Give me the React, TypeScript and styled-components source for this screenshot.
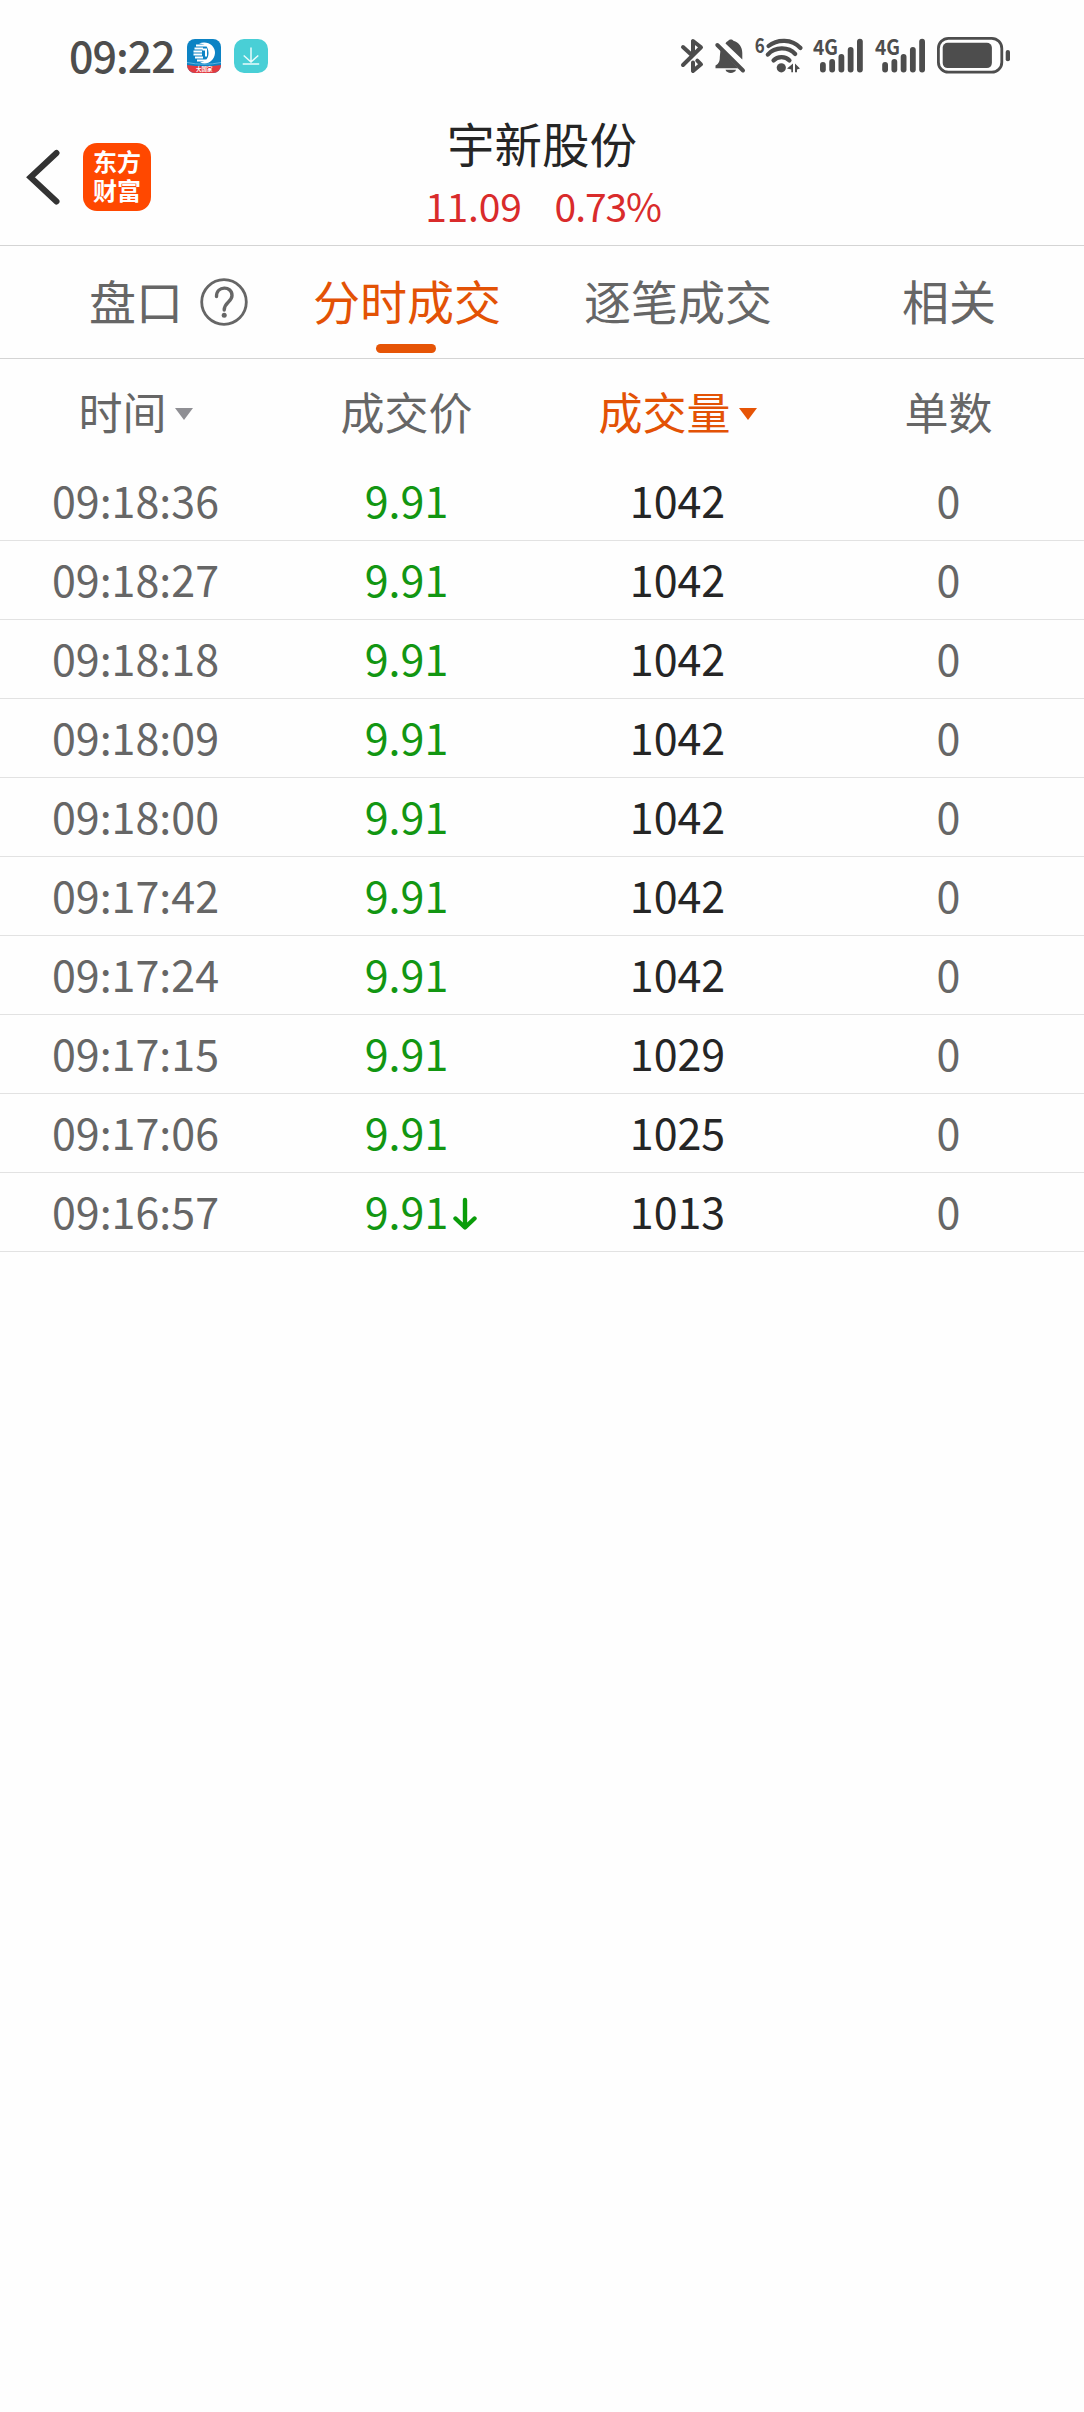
import React from 'react';
import styled, { createGlobalStyle } from 'styled-components';

const GlobalStyle = createGlobalStyle`
  * { box-sizing: border-box; }
  body {
    margin: 0;
    background: #fefefe;
    font-family: "Noto Sans CJK SC", "Noto Sans", sans-serif;
    font-weight: 400;
    color: #252525;
  }
`;

const Screen = styled.div`
  width: 1084px;
  min-height: 2412px;
  background: #fefefe;
`;

const StatusBar = styled.div`
  display: flex;
  align-items: center;
  justify-content: space-between;
  height: 112px;
  padding: 0 72px 0 69px;
`;

const StatusLeft = styled.div`
  display: flex;
  align-items: center;
  gap: 12px;
`;

const Clock = styled.span`
  padding-bottom: 5px;
  font-size: 43px;
  line-height: 60px;
  font-weight: 500;
  color: #4d4d4d;
  letter-spacing: -1px;
`;

const StatusIcons = styled.svg`
  display: block;
`;

const Header = styled.header`
  display: grid;
  grid-template-columns: 271px 1fr 271px;
  grid-template-rows: 133px;
  align-items: center;
  height: 134px;
  border-bottom: 1px solid #d4d4d4;
`;

const HeaderLeft = styled.div`
  display: flex;
  align-items: center;
  gap: 23px;
  height: 70px;
  margin-top: -3px;
  padding: 0 0 0 26px;
`;

const Logo = styled.div`
  width: 68px;
  height: 68px;
  padding: 3px 9px 0 10px;
  border-radius: 14px;
  background: #ff4800;
  color: #fff;
  font-size: 24px;
  line-height: 29px;
  font-weight: 700;
  word-break: break-all;
`;

const Heading = styled.div`
  display: flex;
  flex-direction: column;
  align-items: center;
  padding-bottom: 13px;
`;

const StockName = styled.h1`
  margin: 0;
  font-size: 47.5px;
  line-height: 66px;
  font-weight: 400;
`;

const Quote = styled.div`
  display: flex;
  gap: 33px;
  padding-left: 2px;
  font-size: 39px;
  line-height: 58px;
  color: #d92b2b;
`;

const Figure = styled.span<{ $tracking: number }>`
  letter-spacing: ${(p) => p.$tracking}px;
`;

const Tabs = styled.nav`
  display: grid;
  grid-template-columns: repeat(4, 1fr);
  height: 113px;
  border-bottom: 1px solid #d4d4d4;
`;

const Tab = styled.div<{ $active?: boolean }>`
  position: relative;
  display: flex;
  align-items: center;
  justify-content: center;
  padding: 0 0 5px 1px;
  font-size: 47px;
  color: ${(p) => (p.$active ? '#e35205' : '#666')};
  &::after {
    content: '';
    display: ${(p) => (p.$active ? 'block' : 'none')};
    position: absolute;
    bottom: 5px;
    left: 105px;
    width: 60px;
    height: 9px;
    border-radius: 5px;
    background: #e65406;
  }
`;

const HelpIcon = styled.svg`
  position: absolute;
  left: 200px;
  top: 32px;
`;

const Columns = styled.div`
  display: grid;
  grid-template-columns: repeat(4, 1fr);
  height: 103px;
`;

const ColumnTitle = styled.div<{ $active?: boolean }>`
  display: flex;
  align-items: center;
  justify-content: center;
  gap: 8px;
  font-size: 44px;
  color: ${(p) => (p.$active ? '#e35205' : '#666')};
`;

const SortMark = styled.i<{ $active?: boolean }>`
  margin-top: 7px;
  border-left: 9px solid transparent;
  border-right: 9px solid transparent;
  border-top: 12px solid ${(p) => (p.$active ? '#e65406' : '#8f8f94')};
`;

const Row = styled.div`
  display: grid;
  grid-template-columns: repeat(4, 1fr);
  height: 79px;
  border-bottom: 1px solid #e2e2e2;
  font-size: 43px;
  line-height: 74px;
  text-align: center;
`;

const Cell = styled.span<{ $tone: 'muted' | 'fall' | 'strong' }>`
  color: ${(p) => ({ muted: '#666', fall: '#129612', strong: '#252525' })[p.$tone]};
`;

const Price = styled.span`
  position: relative;
`;

const FallArrow = styled.svg`
  position: absolute;
  left: 87px;
  top: 17px;
`;

const trades = [
  ['09:18:36', '9.91', '1042', '0'],
  ['09:18:27', '9.91', '1042', '0'],
  ['09:18:18', '9.91', '1042', '0'],
  ['09:18:09', '9.91', '1042', '0'],
  ['09:18:00', '9.91', '1042', '0'],
  ['09:17:42', '9.91', '1042', '0'],
  ['09:17:24', '9.91', '1042', '0'],
  ['09:17:15', '9.91', '1029', '0'],
  ['09:17:06', '9.91', '1025', '0'],
  ['09:16:57', '9.91', '1013', '0', 'fall'],
];

const INK = '#4d4d4d';

function Signal({ x }: { x: number }) {
  const tops = [62, 59, 54, 47, 38.7];
  return (
    <g fill={INK}>
      {tops.map((t, i) => (
        <rect key={t} x={x + i * 9.25} y={t} width="5.8" height={72.5 - t} rx="2.9" />
      ))}
    </g>
  );
}

function SystemIcons() {
  const label = { fontFamily: 'Noto Sans CJK SC, sans-serif', fontWeight: 700, fill: INK };
  return (
    <StatusIcons width="332" height="64" viewBox="680 24 332 64">
      <g fill="none" stroke={INK} strokeWidth="4" strokeLinecap="round" strokeLinejoin="round">
        <path d="M683 47 L692 55.3 M683 65 L701 47.3 L693 41 V55" />
        <path d="M697.3 60.6 L701 64.3 L693 71 V62.5" />
      </g>
      <path d="M725.5 43.5 C726 42 727.5 41.6 728.2 40.8 C729.5 39 732.3 39 733.4 40.8 C739 42.5 742.3 47 742.3 53 V59.5 Z" fill={INK} />
      <path d="M720.5 49.5 L738 68.3 H715.5 V65.5 C719 63.5 719.8 61 719.8 57 Z" fill={INK} />
      <path d="M725.5 69.8 H736 C735 74 726.5 74 725.5 69.8 Z" fill={INK} />
      <path d="M717.3 45 L743 70.5" stroke={INK} strokeWidth="4" strokeLinecap="round" />
      <text x="754.8" y="53" fontSize="21" textLength="10" lengthAdjust="spacingAndGlyphs" {...label}>6</text>
      <g fill="none" stroke={INK} strokeWidth="4.2" strokeLinecap="round">
        <path d="M768.5 46 C777 39 792 38.5 800.5 48" />
        <path d="M767.8 54.6 C775 46.5 788.5 46.5 795.2 54" />
        <path d="M773.5 60.5 C777.5 56 785.5 56 789.5 60.5" />
      </g>
      <circle cx="781.3" cy="67.8" r="4.6" fill={INK} />
      <path d="M787 68.5 L793 63.5 V72.3 H791.3 V69.5 Z M795 63.5 L800 68.5 L797 69.5 V72.3 H795 Z" fill={INK} />
      <text x="813" y="54.8" fontSize="21" textLength="25" lengthAdjust="spacingAndGlyphs" {...label}>4G</text>
      <Signal x={820} />
      <text x="875" y="54.8" fontSize="21" textLength="25" lengthAdjust="spacingAndGlyphs" {...label}>4G</text>
      <Signal x={882.2} />
      <rect x="938.4" y="38.4" width="63.4" height="33.8" rx="10" fill="none" stroke={INK} strokeWidth="2.8" />
      <rect x="942.7" y="42.8" width="49.2" height="25.3" rx="5" fill={INK} />
      <rect x="1005.7" y="50" width="4.3" height="11.3" rx="2.1" fill={INK} />
    </StatusIcons>
  );
}

function AppBadges() {
  return (
    <StatusIcons width="82" height="34" viewBox="0 0 82 34">
      <defs>
        <clipPath id="badge"><rect width="34" height="34" rx="8" /></clipPath>
      </defs>
      <g clipPath="url(#badge)">
        <rect width="34" height="34" fill="#0c83c4" />
        <path d="M0 26 Q17 28.5 34 26 V34 H0 Z" fill="#e23a40" />
        <path d="M0 23.5 Q17 27 34 23.5" stroke="#5fb4e0" strokeWidth="1" fill="none" />
      </g>
      <path d="M12 4.5 C20 1 28.500 6.500 28 14 C27.500 22 20 26.500 13 23.500 C19 22.500 21.500 19 21.500 14 C21.500 8 18 4.500 12 4.500 Z" fill="#fff" />
      <path d="M9 6.500 H19 M7.500 9.500 H16 M6.500 12.500 H15 M6.500 15.500 H15 M8 18.500 H16 M10 21.500 H19" stroke="#fff" strokeWidth="1.800" />
      <path d="M15.500 10.500 H19 V17.500" stroke="#fff" strokeWidth="2" fill="none" />
      <text x="9" y="31.500" fontSize="5.500" fontWeight="700" fill="#fff">大国家</text>
      <rect x="47" width="34" height="34" rx="10" fill="#49cfd6" />
      <path d="M64 8.5 V22.5 M56.700 16.500 L64 23 L71.300 16.500 M55.700 25 H72.200" stroke="#e9fbfb" strokeWidth="1.500" fill="none" />
    </StatusIcons>
  );
}

export default function App() {
  return (
    <Screen>
      <GlobalStyle />
      <StatusBar>
        <StatusLeft>
          <Clock>09:22</Clock>
          <AppBadges />
        </StatusLeft>
        <SystemIcons />
      </StatusBar>
      <Header>
        <HeaderLeft>
          <svg width="34" height="56" viewBox="0 0 34 56">
            <path d="M30.500 4 L4.500 28.300 L30.500 52.500" fill="none" stroke="#333" strokeWidth="6" strokeLinecap="round" />
          </svg>
          <Logo>东方财富</Logo>
        </HeaderLeft>
        <Heading>
          <StockName>宇新股份</StockName>
          <Quote>
            <Figure $tracking={-0.2}>11.09</Figure>
            <Figure $tracking={-1.1}>0.73%</Figure>
          </Quote>
        </Heading>
      </Header>
      <Tabs>
        <Tab>
          盘口
          <HelpIcon width="48" height="48" viewBox="0 0 48 48" fill="none" stroke="#666">
            <circle cx="24" cy="24" r="22.3" strokeWidth="2.8" />
            <path d="M16.5 18.5 C16.5 7.5 32 7.5 32 17.5 C32 24 24.2 24 24.2 32" strokeWidth="3.4" strokeLinecap="round" />
            <circle cx="24.2" cy="37.2" r="2.5" fill="#666" stroke="none" />
          </HelpIcon>
        </Tab>
        <Tab $active>分时成交</Tab>
        <Tab>逐笔成交</Tab>
        <Tab>相关</Tab>
      </Tabs>
      <Columns>
        <ColumnTitle>时间<SortMark /></ColumnTitle>
        <ColumnTitle>成交价</ColumnTitle>
        <ColumnTitle $active>成交量<SortMark $active /></ColumnTitle>
        <ColumnTitle>单数</ColumnTitle>
      </Columns>
      {trades.map(([time, price, volume, count, trend]) => (
        <Row key={time}>
          <Cell $tone="muted">{time}</Cell>
          <Cell $tone="fall">
            <Price>
              {price}
              {trend && (
                <FallArrow width="26" height="34" viewBox="0 0 26 34" fill="none" stroke="#0a9c0a" strokeWidth="4.4" strokeLinecap="round" strokeLinejoin="round">
                  <path d="M13 4 V31 M3.5 22.5 L13 31.5 L22.5 22.5" />
                </FallArrow>
              )}
            </Price>
          </Cell>
          <Cell $tone="strong">{volume}</Cell>
          <Cell $tone="muted">{count}</Cell>
        </Row>
      ))}
    </Screen>
  );
}
